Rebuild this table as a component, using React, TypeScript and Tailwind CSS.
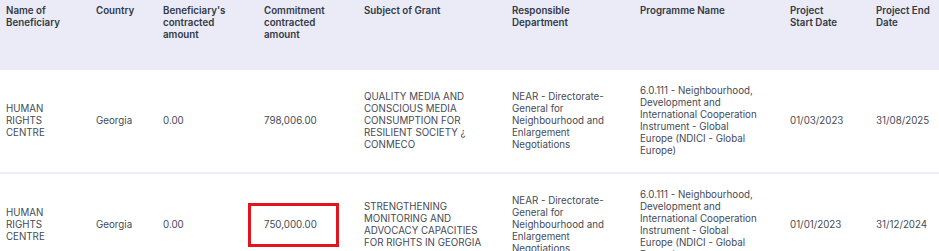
import React from 'react'

interface Grant {
  beneficiary: string
  country: string
  beneficiaryAmount: string
  commitment: string
  subject: string
  department: string
  programme: string
  start: string
  end: string
  highlight?: boolean
}

const columns = [
  { label: 'Name of Beneficiary', cls: 'w-[90px] pr-[18px]' },
  { label: 'Country', cls: 'w-[67px] pr-[8px]' },
  { label: "Beneficiary's contracted amount", cls: 'w-[101px] pr-[17px]' },
  { label: 'Commitment contracted amount', cls: 'w-[100px] pr-[16px]' },
  { label: 'Subject of Grant', cls: 'w-[148px] pr-[16px]' },
  { label: 'Responsible Department', cls: 'w-[128px] pr-[18px]' },
  { label: 'Programme Name', cls: 'w-[150px] pr-[23px]' },
  { label: 'Project Start Date', cls: 'w-[86px] pr-[22px]' },
  { label: 'Project End Date', cls: 'w-[69px] pr-[4px]' },
]

const programme =
  '6.0.111 - Neighbourhood, Development and International Cooperation Instrument - Global Europe (NDICI - Global Europe)'
const department = 'NEAR - Directorate-General for Neighbourhood and Enlargement Negotiations'

const grants: Grant[] = [
  {
    beneficiary: 'HUMAN RIGHTS CENTRE',
    country: 'Georgia',
    beneficiaryAmount: '0.00',
    commitment: '798,006.00',
    subject: 'QUALITY MEDIA AND CONSCIOUS MEDIA CONSUMPTION FOR RESILIENT SOCIETY ¿ CONMECO',
    department,
    programme,
    start: '01/03/2023',
    end: '31/08/2025',
  },
  {
    beneficiary: 'HUMAN RIGHTS CENTRE',
    country: 'Georgia',
    beneficiaryAmount: '0.00',
    commitment: '750,000.00',
    subject: 'STRENGTHENING MONITORING AND ADVOCACY CAPACITIES FOR RIGHTS IN GEORGIA',
    department,
    programme,
    start: '01/01/2023',
    end: '31/12/2024',
    highlight: true,
  },
]

const Cell = ({ i, children }: { i: number; children: React.ReactNode }) => (
  <td className={`${columns[i].cls} pl-[6px] py-[15px] align-middle`}>{children}</td>
)

export default function App() {
  return (
    <div className="w-[939px] h-[251px] overflow-hidden bg-white font-['Inter',sans-serif] text-[9.75px] leading-[12px]">
      <table className="w-[939px] table-fixed border-collapse">
        <thead>
          <tr className="bg-[#eaebf7] h-[70px]">
            {columns.map((c) => (
              <th
                key={c.label}
                className={`${c.cls} pl-[6px] pt-[5px] align-top text-left font-semibold text-[#323844]`}
              >
                {c.label}
              </th>
            ))}
          </tr>
        </thead>
        <tbody className="text-[#454a56]">
          {grants.map((g, idx) => (
            <tr key={idx} className="border-b-2 border-[#efeef7]">
              <Cell i={0}>{g.beneficiary}</Cell>
              <Cell i={1}>{g.country}</Cell>
              <Cell i={2}>{g.beneficiaryAmount}</Cell>
              <Cell i={3}>
                <span className="relative inline-block">
                  {g.commitment}
                  {g.highlight && (
                    <span className="absolute -top-[16px] -bottom-[16px] -left-[16px] -right-[22px] border-[3px] border-[#e2141d]" />
                  )}
                </span>
              </Cell>
              <Cell i={4}>{g.subject}</Cell>
              <Cell i={5}>{g.department}</Cell>
              <Cell i={6}>{g.programme}</Cell>
              <Cell i={7}>{g.start}</Cell>
              <Cell i={8}>{g.end}</Cell>
            </tr>
          ))}
        </tbody>
      </table>
    </div>
  )
}
